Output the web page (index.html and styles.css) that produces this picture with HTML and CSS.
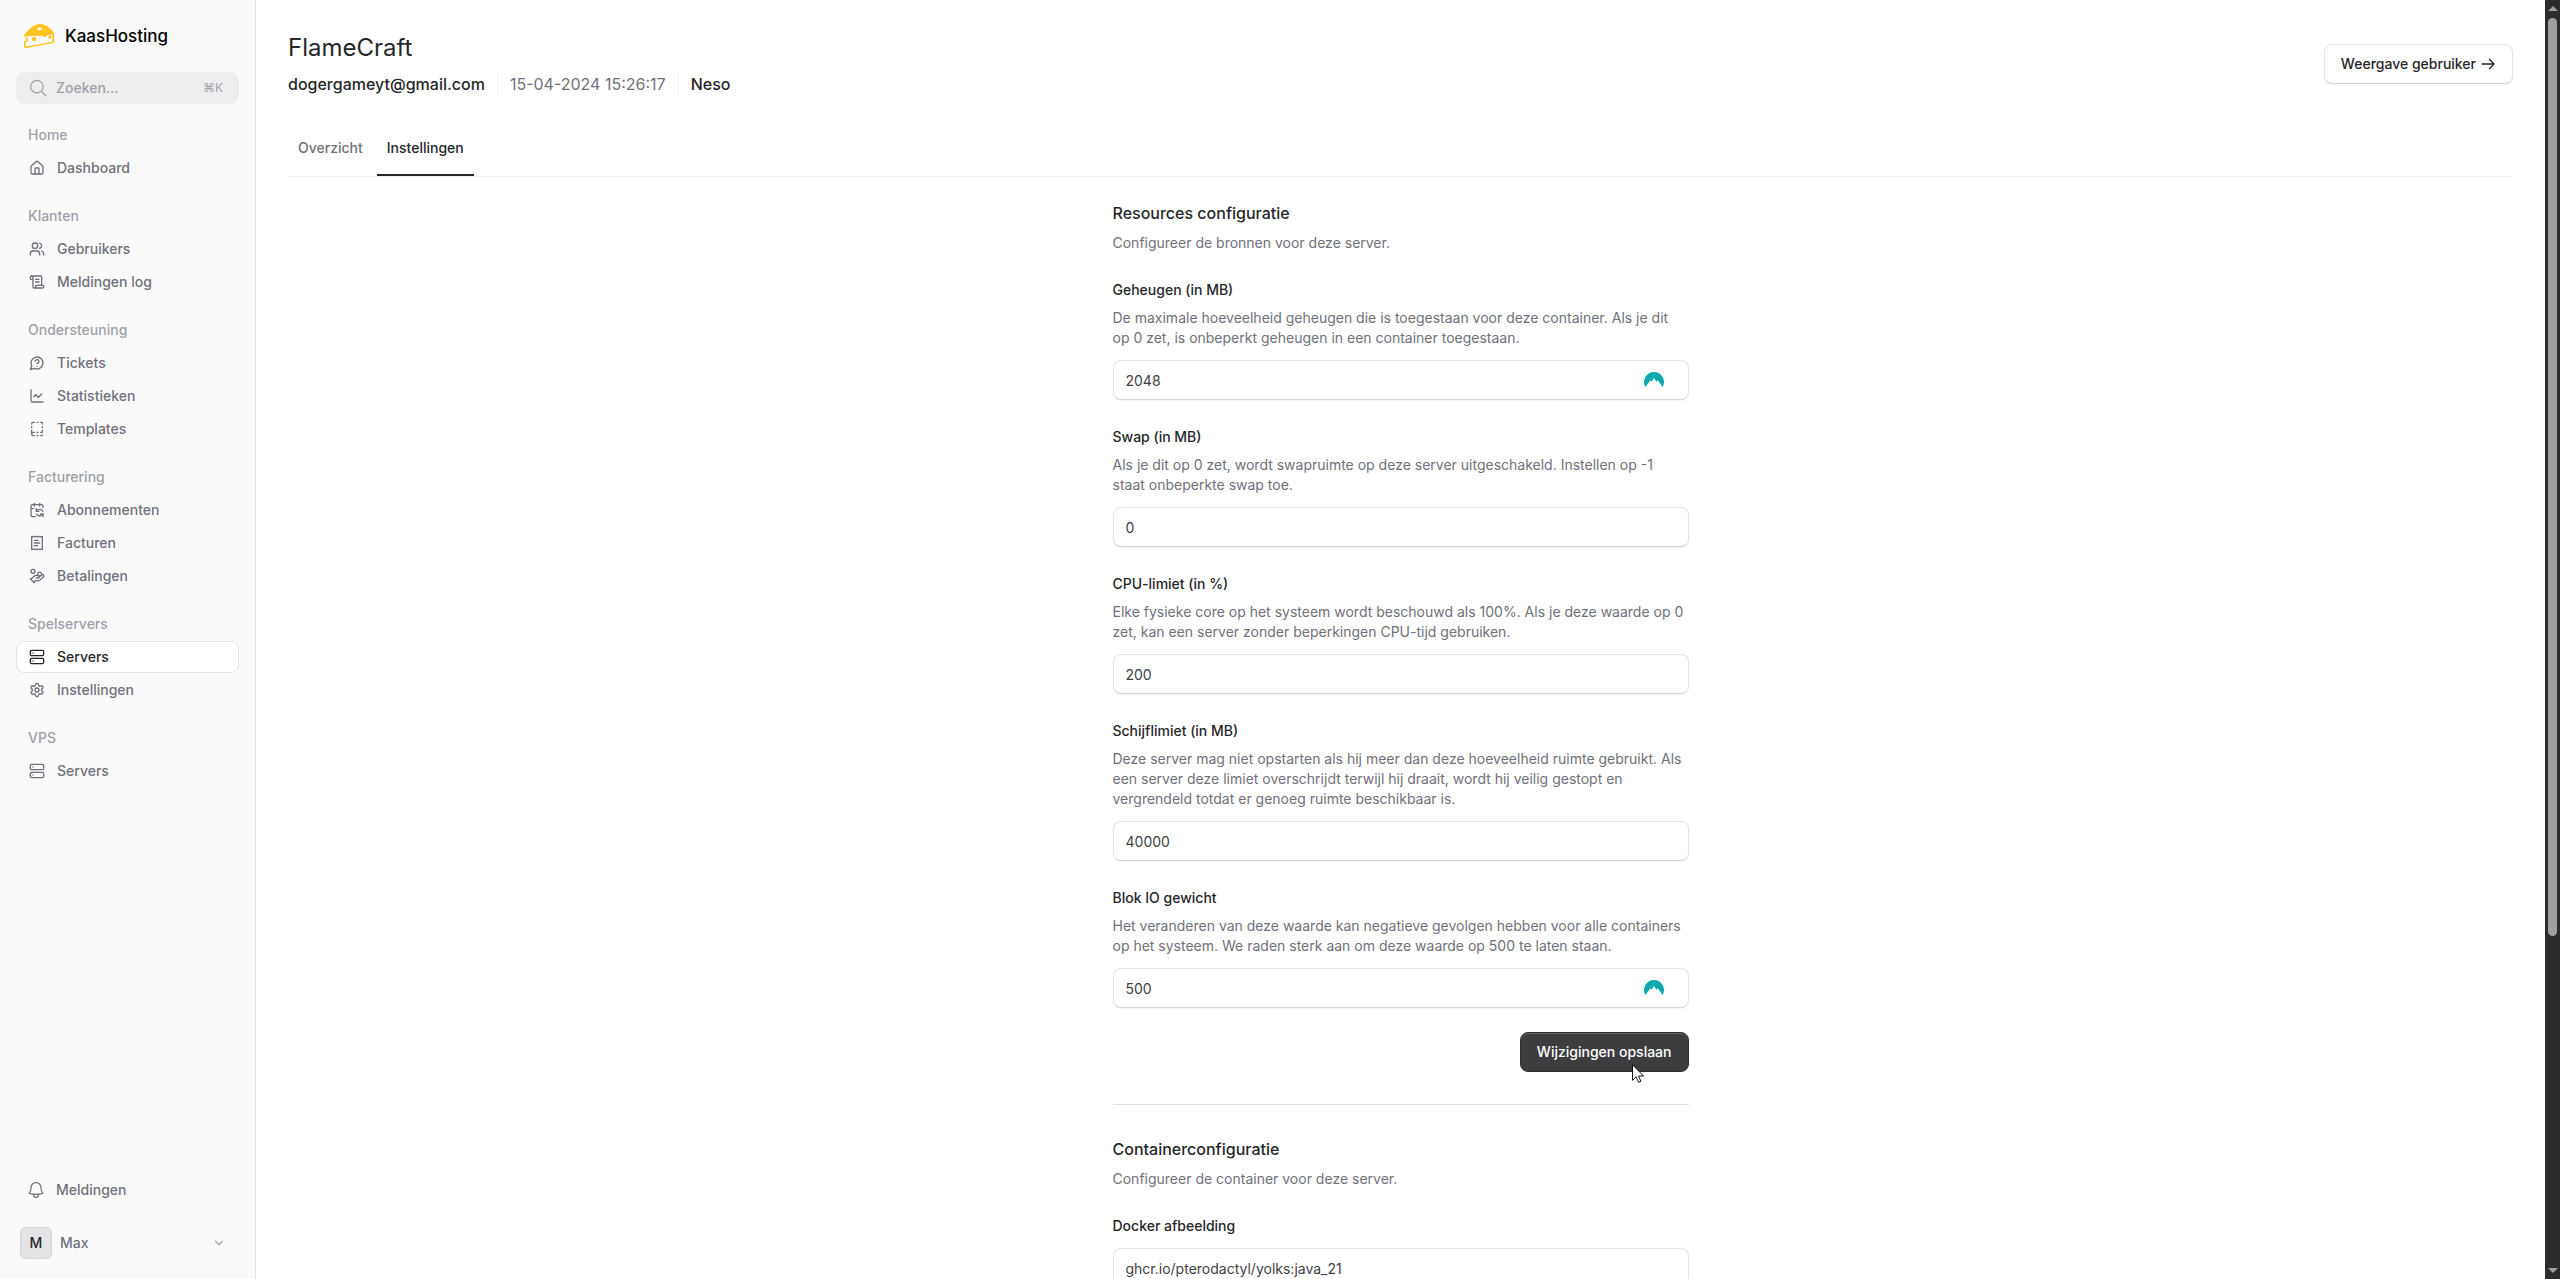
FILE: index.html
```html
<!DOCTYPE html>
<html lang="nl">
<head>
    <meta charset="UTF-8">
    <meta name="viewport" content="width=device-width, initial-scale=1.0">
    <title>FlameCraft - KaasHosting</title>
    <link rel="stylesheet" href="styles.css">
</head>
<body>
    <aside class="sidebar">
        <a href="#" class="brand">
            <svg class="brand-logo" viewBox="0 0 30 24" aria-hidden="true">
                <path fill="#ffc31f" fill-rule="evenodd" d="M0 11.500C4 6 9 1.500 14 .3c2-.6 5-.2 8 1.400 4 2 8 5 8 9v6.500c0 1.300-.6 1.900-1.800 2.100L2.500 24C1 24.200 0 23.600 0 22v-3.500c0-.8.5-1.100 1.100-1.400 1.800-.8 1.800-3.300.2-4.200C.5 12.500 0 12 0 11.500ZM1.700 12c3.200 1.400 3 5.400.2 6.500-.3.2-.4.4-.4.700v2.600c0 .6.3.8.9.7l25-4.400c.7-.1 1-.5 1-1.100v-6.800l-5.500 1c-.2 2.200-3.800 2.600-4.500.5Z"/>
                <circle cx="10" cy="15" r="2.300" fill="#ffc31f"/>
                <circle cx="26" cy="13" r="1.700" fill="#ffc31f"/>
                <ellipse cx="15.500" cy="5" rx="2.300" ry="1.400" fill="#fafafa"/>
            </svg>
            <span>KaasHosting</span>
        </a>

        <button type="button" class="search">
            <svg class="icon-lg" viewBox="0 0 24 24"><path d="m21 21-5.200-5.200m0 0A7.500 7.500 0 1 0 5.200 5.200a7.500 7.500 0 0 0 10.600 10.600Z"/></svg>
            <span class="search-text">Zoeken...</span>
            <span class="shortcut">⌘K</span>
        </button>

        <nav class="nav">
            <div class="nav-group">
                <div class="nav-heading">Home</div>
                <a href="#" class="nav-item">
                    <svg class="icon" viewBox="0 0 24 24"><path d="M15 21v-8a1 1 0 0 0-1-1h-4a1 1 0 0 0-1 1v8"/><path d="M3 10a2 2 0 0 1 .7-1.500l7-6a2 2 0 0 1 2.600 0l7 6A2 2 0 0 1 21 10v9a2 2 0 0 1-2 2H5a2 2 0 0 1-2-2z"/></svg>
                    Dashboard
                </a>
            </div>

            <div class="nav-group">
                <div class="nav-heading">Klanten</div>
                <a href="#" class="nav-item">
                    <svg class="icon" viewBox="0 0 24 24"><path d="M16 21v-2a4 4 0 0 0-4-4H6a4 4 0 0 0-4 4v2"/><circle cx="9" cy="7" r="4"/><path d="M22 21v-2a4 4 0 0 0-3-3.870"/><path d="M16 3.130a4 4 0 0 1 0 7.750"/></svg>
                    Gebruikers
                </a>
                <a href="#" class="nav-item">
                    <svg class="icon" viewBox="0 0 24 24"><path d="M15 12h-5M15 8h-5M19 17V5a2 2 0 0 0-2-2H4"/><path d="M8 21h12a2 2 0 0 0 2-2v-1a1 1 0 0 0-1-1H11a1 1 0 0 0-1 1v1a2 2 0 1 1-4 0V5a2 2 0 1 0-4 0v2a1 1 0 0 0 1 1h3"/></svg>
                    Meldingen log
                </a>
            </div>

            <div class="nav-group">
                <div class="nav-heading">Ondersteuning</div>
                <a href="#" class="nav-item">
                    <svg class="icon" viewBox="0 0 24 24"><path d="M7.900 20A9 9 0 1 0 4 16.100L2 22Z"/><path d="M9.090 9a3 3 0 0 1 5.830 1c0 2-3 3-3 3M12 17h.01"/></svg>
                    Tickets
                </a>
                <a href="#" class="nav-item">
                    <svg class="icon" viewBox="0 0 24 24"><path d="M3 3v16a2 2 0 0 0 2 2h16"/><path d="m19 9-5 5-4-4-3 3"/></svg>
                    Statistieken
                </a>
                <a href="#" class="nav-item">
                    <svg class="icon" viewBox="0 0 24 24"><path d="M12 17h1.500M12 22h1.500M12 2h1.500M17.500 22H19a1 1 0 0 0 1-1M17.500 2H19a1 1 0 0 1 1 1v1.500M20 14v3h-2.500M20 8.500V10M4 10V8.500M4 19.500V14M4 4.500A2.500 2.500 0 0 1 6.500 2H8M8 22H6.500a1 1 0 0 1 0-5H8"/></svg>
                    Templates
                </a>
            </div>

            <div class="nav-group">
                <div class="nav-heading">Facturering</div>
                <a href="#" class="nav-item">
                    <svg class="icon" viewBox="0 0 24 24"><path d="M11 10v4h4"/><path d="m11 14 1.535-1.605a5 5 0 0 1 8 1.500"/><path d="M16 2v4"/><path d="m21 18-1.535 1.605a5 5 0 0 1-8-1.500"/><path d="M21 22v-4h-4"/><path d="M21 8.500V6a2 2 0 0 0-2-2H5a2 2 0 0 0-2 2v14a2 2 0 0 0 2 2h4.300M3 10h4M8 2v4"/></svg>
                    Abonnementen
                </a>
                <a href="#" class="nav-item">
                    <svg class="icon" viewBox="0 0 24 24"><path d="M4 2v20l2-1 2 1 2-1 2 1 2-1 2 1 2-1 2 1V2l-2 1-2-1-2 1-2-1-2 1-2-1-2 1Z"/><path d="M14 8H8M16 12H8M13 16H8"/></svg>
                    Facturen
                </a>
                <a href="#" class="nav-item">
                    <svg class="icon" viewBox="0 0 24 24"><path d="M11 15h2a2 2 0 1 0 0-4h-3c-.6 0-1.100.2-1.400.6L3 17"/><path d="m7 21 1.600-1.400c.3-.4.8-.6 1.400-.6h4c1.100 0 2.100-.4 2.800-1.200l4.600-4.400a2 2 0 0 0-2.750-2.910l-4.200 3.900"/><path d="m2 16 6 6"/><circle cx="16" cy="9" r="2.900"/><circle cx="6" cy="5" r="3"/></svg>
                    Betalingen
                </a>
            </div>

            <div class="nav-group">
                <div class="nav-heading">Spelservers</div>
                <a href="#" class="nav-item active">
                    <svg class="icon" viewBox="0 0 24 24"><rect width="20" height="8" x="2" y="2" rx="2"/><rect width="20" height="8" x="2" y="14" rx="2"/><path d="M6 6h.01M6 18h.01"/></svg>
                    Servers
                </a>
                <a href="#" class="nav-item">
                    <svg class="icon" viewBox="0 0 24 24"><path d="M12.220 2h-.44a2 2 0 0 0-2 2v.18a2 2 0 0 1-1 1.730l-.43.25a2 2 0 0 1-2 0l-.15-.08a2 2 0 0 0-2.730.73l-.22.38a2 2 0 0 0 .73 2.730l.15.1a2 2 0 0 1 1 1.720v.51a2 2 0 0 1-1 1.740l-.15.09a2 2 0 0 0-.73 2.730l.22.38a2 2 0 0 0 2.730.73l.15-.08a2 2 0 0 1 2 0l.43.25a2 2 0 0 1 1 1.730V20a2 2 0 0 0 2 2h.44a2 2 0 0 0 2-2v-.18a2 2 0 0 1 1-1.730l.43-.25a2 2 0 0 1 2 0l.15.08a2 2 0 0 0 2.730-.73l.22-.39a2 2 0 0 0-.73-2.730l-.15-.08a2 2 0 0 1-1-1.740v-.5a2 2 0 0 1 1-1.740l.15-.09a2 2 0 0 0 .73-2.730l-.22-.38a2 2 0 0 0-2.730-.73l-.15.08a2 2 0 0 1-2 0l-.43-.25a2 2 0 0 1-1-1.730V4a2 2 0 0 0-2-2z"/><circle cx="12" cy="12" r="3"/></svg>
                    Instellingen
                </a>
            </div>

            <div class="nav-group">
                <div class="nav-heading">VPS</div>
                <a href="#" class="nav-item">
                    <svg class="icon" viewBox="0 0 24 24"><rect width="20" height="8" x="2" y="2" rx="2"/><rect width="20" height="8" x="2" y="14" rx="2"/><path d="M6 6h.01M6 18h.01"/></svg>
                    Servers
                </a>
            </div>
        </nav>

        <a href="#" class="notifications">
            <svg class="icon-lg" viewBox="0 0 24 24"><path d="M14.857 17.082a23.848 23.848 0 0 0 5.454-1.310A8.967 8.967 0 0 1 18 9.750V9A6 6 0 0 0 6 9v.75a8.967 8.967 0 0 1-2.312 6.022c1.733.64 3.560 1.085 5.455 1.310m5.714 0a24.255 24.255 0 0 1-5.714 0m5.714 0a3 3 0 1 1-5.714 0"/></svg>
            Meldingen
        </a>
        <button type="button" class="profile">
            <span class="avatar">M</span>
            <span class="profile-name">Max</span>
            <svg class="icon" viewBox="0 0 24 24"><path d="m6 9 6 6 6-6"/></svg>
        </button>
    </aside>

    <main class="main">
        <header class="page-header">
            <div>
                <h1>FlameCraft</h1>
                <div class="meta">
                    <a href="#">dogergameyt@gmail.com</a>
                    <span class="meta-date">15-04-2024 15:26:17</span>
                    <a href="#">Neso</a>
                </div>
            </div>
            <button type="button" class="btn">
                Weergave gebruiker
                <svg class="icon" viewBox="0 0 24 24"><path d="M3 12h18M14 5l7 7-7 7"/></svg>
            </button>
        </header>

        <nav class="tabs">
            <a href="#" class="tab">Overzicht</a>
            <a href="#" class="tab active">Instellingen</a>
        </nav>

        <div class="content">
            <form class="section">
                <h2>Resources configuratie</h2>
                <p>Configureer de bronnen voor deze server.</p>

                <div class="field">
                    <label for="memory">Geheugen (in MB)</label>
                    <p>De maximale hoeveelheid geheugen die is toegestaan voor deze container. Als je dit op 0 zet, is onbeperkt geheugen in een container toegestaan.</p>
                    <div class="input-wrap">
                        <input type="text" id="memory" value="2048">
                        <svg class="pass-icon" viewBox="0 0 20 15" aria-hidden="true"><path d="M1.340 15A10 10 0 1 1 18.660 15L13.800 8.300 12.500 9.700 10 6 7.500 9.700 6.500 8.300Z"/></svg>
                    </div>
                </div>

                <div class="field">
                    <label for="swap">Swap (in MB)</label>
                    <p>Als je dit op 0 zet, wordt swapruimte op deze server uitgeschakeld. Instellen op -1 staat onbeperkte swap toe.</p>
                    <input type="text" id="swap" value="0">
                </div>

                <div class="field">
                    <label for="cpu">CPU-limiet (in %)</label>
                    <p>Elke fysieke core op het systeem wordt beschouwd als 100%. Als je deze waarde op 0 zet, kan een server zonder beperkingen CPU-tijd gebruiken.</p>
                    <input type="text" id="cpu" value="200">
                </div>

                <div class="field">
                    <label for="disk">Schijflimiet (in MB)</label>
                    <p>Deze server mag niet opstarten als hij meer dan deze hoeveelheid ruimte gebruikt. Als een server deze limiet overschrijdt terwijl hij draait, wordt hij veilig gestopt en vergrendeld totdat er genoeg ruimte beschikbaar is.</p>
                    <input type="text" id="disk" value="40000">
                </div>

                <div class="field">
                    <label for="io">Blok IO gewicht</label>
                    <p>Het veranderen van deze waarde kan negatieve gevolgen hebben voor alle containers op het systeem. We raden sterk aan om deze waarde op 500 te laten staan.</p>
                    <div class="input-wrap">
                        <input type="text" id="io" value="500">
                        <svg class="pass-icon" viewBox="0 0 20 15" aria-hidden="true"><path d="M1.340 15A10 10 0 1 1 18.660 15L13.800 8.300 12.500 9.700 10 6 7.500 9.700 6.500 8.300Z"/></svg>
                    </div>
                </div>

                <div class="actions">
                    <button type="button" class="btn btn-primary">
                        Wijzigingen opslaan
                        <svg class="cursor" viewBox="0 0 12 19" aria-hidden="true"><path d="M.5.7v15.600l3.600-3.500 2.500 5.500 2.300-1-2.400-5.300h5z"/></svg>
                    </button>
                </div>
            </form>

            <hr>

            <form class="section">
                <h2>Containerconfiguratie</h2>
                <p>Configureer de container voor deze server.</p>

                <div class="field">
                    <label for="image" class="label-only">Docker afbeelding</label>
                    <input type="text" id="image" value="ghcr.io/pterodactyl/yolks:java_21">
                </div>
            </form>
        </div>
    </main>

    <div class="scrollbar" aria-hidden="true">
        <div class="arrow-up"></div>
        <div class="thumb"></div>
        <div class="track"></div>
        <div class="arrow-down"></div>
    </div>
</body>
</html>
```

FILE: styles.css
```css
* {
    box-sizing: border-box;
}
body {
    margin: 0;
    height: 100vh;
    display: flex;
    overflow: hidden;
    background-color: #fff;
    color: #27272a;
    font-family: 'Inter', 'Liberation Sans', sans-serif;
    font-size: 14px;
    line-height: 20px;
}
a {
    color: inherit;
    text-decoration: none;
}
button, input {
    font: inherit;
}
button {
    cursor: pointer;
}
h1, h2, p {
    margin: 0;
}
svg {
    flex-shrink: 0;
}
.icon, .icon-lg {
    width: 16px;
    height: 16px;
    fill: none;
    stroke: currentColor;
    stroke-width: 2;
    stroke-linecap: round;
    stroke-linejoin: round;
}
.icon-lg {
    width: 20px;
    height: 20px;
    stroke-width: 1.5;
}

/* Sidebar */
.sidebar {
    width: 256px;
    flex-shrink: 0;
    display: flex;
    flex-direction: column;
    padding: 16px;
    background-color: #fafafa;
    border-right: 1px solid #e4e4e7;
    color: #71717b;
    font-weight: 500;
}
.brand {
    display: flex;
    align-items: center;
    gap: 11px;
    height: 40px;
    padding: 0 8px;
    color: #000;
    font-size: 17px;
}
.brand-logo {
    width: 30px;
    height: 24px;
}
.search {
    display: flex;
    align-items: center;
    gap: 8px;
    height: 32px;
    margin: 16px 0 15px;
    padding: 0 16px 0 12px;
    border: none;
    border-radius: 8px;
    background-color: #eee;
    color: #9f9fa9;
    font-weight: 500;
}
.search-text {
    flex: 1;
    text-align: left;
}
.shortcut {
    font-size: 12px;
    font-weight: 400;
}
.nav {
    flex: 1;
    display: flex;
    flex-direction: column;
    gap: 16px;
}
.nav-group {
    display: flex;
    flex-direction: column;
    gap: 1px;
}
.nav-heading {
    padding: 6px 12px;
    color: #9f9fa9;
}
.nav-item {
    display: flex;
    align-items: center;
    gap: 12px;
    height: 32px;
    padding: 0 12px;
    border: 1px solid transparent;
    border-radius: 8px;
}
.nav-item.active {
    background-color: #fff;
    border-color: #e4e4e7;
    color: #27272a;
}
.notifications {
    display: flex;
    align-items: center;
    gap: 10px;
    height: 32px;
    margin-bottom: 17px;
    padding: 0 10px;
}
.profile {
    display: flex;
    align-items: center;
    gap: 8px;
    height: 40px;
    padding: 4px 13px 4px 4px;
    border: none;
    border-radius: 8px;
    background: none;
    color: #71717b;
    font-weight: 500;
}
.avatar {
    width: 32px;
    height: 32px;
    border: 1px solid #d4d4d8;
    border-radius: 6px;
    background-color: #e4e4e7;
    color: #27272a;
    line-height: 30px;
}
.profile-name {
    flex: 1;
    text-align: left;
}
.profile .icon {
    width: 14px;
    color: #9f9fa9;
}

/* Page */
.main {
    flex: 1;
    min-width: 0;
    padding: 32px;
}
.page-header {
    display: flex;
    justify-content: space-between;
    align-items: center;
}
h1 {
    font-size: 24px;
    line-height: 32px;
    font-weight: 400;
}
.meta {
    display: flex;
    margin-top: 8px;
    font-size: 16px;
    line-height: 24px;
}
.meta a {
    font-weight: 500;
}
.meta-date {
    margin: 0 12px;
    padding: 0 12px;
    border-left: 1px solid #f1f1f2;
    border-right: 1px solid #f1f1f2;
    color: #71717b;
}
.btn {
    position: relative;
    display: flex;
    align-items: center;
    gap: 4px;
    height: 40px;
    padding: 0 16px;
    border: 1px solid #e4e4e7;
    border-bottom-color: #d4d4d8;
    border-radius: 8px;
    background-color: #fff;
    box-shadow: 0 1px 2px rgba(0, 0, 0, 0.05);
    color: #27272a;
    font-weight: 500;
}
.btn-primary {
    border-color: #2f2f31;
    background-color: #3d3d3f;
    box-shadow: inset 0 1px rgba(255, 255, 255, 0.2);
    color: #fff;
}
.cursor {
    position: absolute;
    left: 111px;
    top: 31px;
    width: 12px;
    height: 19px;
    fill: #fff;
    stroke: #111;
}
.tabs {
    display: flex;
    gap: 4px;
    margin-top: 24px;
    border-bottom: 1px solid #f1f1f2;
}
.tab {
    height: 56px;
    padding: 18px 10px 0;
    color: #71717b;
    font-weight: 500;
}
.tab.active {
    border-bottom: 2px solid #27272a;
    color: #27272a;
}

/* Settings form */
.content {
    max-width: 576px;
    margin: 24px auto 0;
}
h2 {
    margin-bottom: 8px;
    font-size: 16px;
    line-height: 24px;
    font-weight: 500;
}
.section p {
    color: #71717b;
}
.field {
    margin-top: 27px;
}
.field label {
    display: block;
    margin-bottom: 8px;
    font-weight: 500;
}
.field .label-only {
    margin-bottom: 12px;
}
.field p {
    margin-bottom: 12px;
}
.field input {
    display: block;
    width: 100%;
    height: 40px;
    padding: 0 12px;
    border: 1px solid #e4e4e7;
    border-bottom-color: #d4d4d8;
    border-radius: 8px;
    box-shadow: 0 1px 2px rgba(0, 0, 0, 0.05);
    color: #3f3f46;
}
.input-wrap {
    position: relative;
}
.pass-icon {
    position: absolute;
    top: 12px;
    right: 25px;
    width: 20px;
    height: 15px;
    fill: #0fa8ad;
}
.actions {
    display: flex;
    justify-content: flex-end;
    margin-top: 24px;
}
hr {
    margin: 32px 0;
    border: none;
    border-top: 1px solid #dfdfe1;
}

/* Scrollbar */
.scrollbar {
    width: 15px;
    flex-shrink: 0;
    display: flex;
    flex-direction: column;
    align-items: center;
    padding: 6px 0;
    background-color: #2c2c2c;
}
.thumb {
    flex: 47;
    width: 9px;
    margin-top: 7px;
    border-radius: 5px;
    background-color: #9f9f9f;
}
.track {
    flex: 17;
}
.arrow-up, .arrow-down {
    border-left: 5px solid transparent;
    border-right: 5px solid transparent;
}
.arrow-up {
    border-bottom: 5px solid #9f9f9f;
}
.arrow-down {
    border-top: 5px solid #9f9f9f;
}
```
